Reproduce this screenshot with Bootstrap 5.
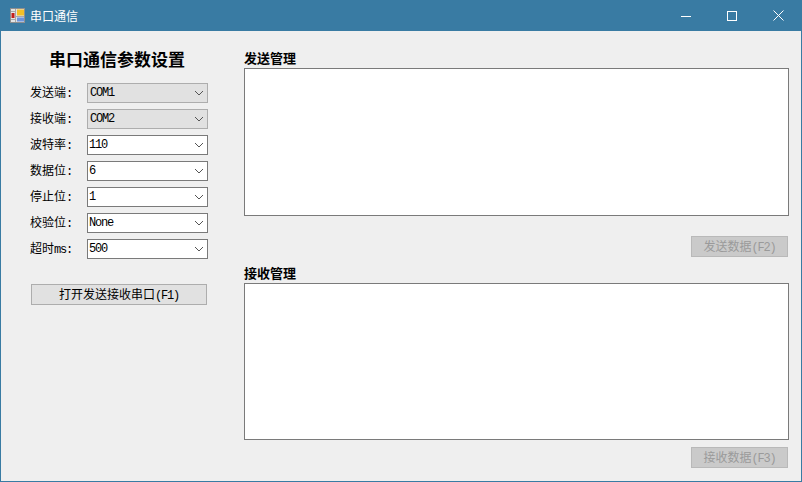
<!DOCTYPE html>
<html lang="zh">
<head>
<meta charset="utf-8">
<title>串口通信</title>
<link href="https://cdn.jsdelivr.net/npm/bootstrap@5.3.0/dist/css/bootstrap.min.css" rel="stylesheet">
<style>
html,body{height:100%;margin:0;overflow:hidden}
body{font-family:"Noto Sans CJK SC",sans-serif;font-size:12px;color:#000;background:#efefef}
.lat{font-family:"Liberation Mono",monospace;font-size:12px;letter-spacing:-1.2px}
.win{width:802px;height:482px;border:1px solid #397ba3;border-top:0;background:#efefef}
.tbar{height:31px;background:#397ba3;color:#fff;padding-left:9px;flex:none}
.tname{font-size:12px;margin-left:5px;line-height:31px}
.wbtn{width:46px;height:31px;display:flex;align-items:center;justify-content:center}
.wrap{flex:1;min-height:0}
.leftp{width:243px;flex:none;padding:17px 0 0 29px}
.ttl{width:174px;font-weight:700;font-size:17px;line-height:22px;margin-bottom:13px;text-align:center}
.frow{height:20px;margin-bottom:6px}
.lbl{width:57px;flex:none;font-size:12px;line-height:18px}
.cmb{width:121px;height:20px;border:1px solid #7a7a7a;background:#fff;padding:0 3px 0 1px;line-height:18px}
.cmb.off{border-color:#adadad;background:#e1e1e1;padding-left:2px}
.btn.opn{width:176px;height:21px;margin:25px 0 0 1px;border:1px solid #adadad;background:#e1e1e1;border-radius:0;padding:0;font-size:12px;line-height:18px;color:#000}
.rightp{flex:1;padding-top:17px;padding-right:12px}
.sect{font-weight:700;font-size:13px;line-height:19px;height:20px}
.tx{display:block;width:545px;border:1px solid #7a7a7a;background:#fff;border-radius:0;padding:0;resize:none;outline:0}
.t1{height:148px}
.t2{height:157px}
.btn.act:disabled{width:97px;height:21px;border:1px solid #b9b9b9;background:#cacaca;color:#9a9a9a;border-radius:0;padding:0;font-size:12px;line-height:18px;opacity:1}
.actbar{padding-right:1px}
.btn.act.a1{margin-top:20px;margin-bottom:6px}
.btn.act.a2{margin-top:7px}
</style>
</head>
<body>
<div class="win d-flex flex-column">
  <div class="tbar d-flex align-items-center">
    <svg width="15" height="15" viewBox="0 0 15 15"><rect x=".5" y=".5" width="14" height="14" fill="#e4e4e4" stroke="#8f8f8f"/><path d="M5.500 1v13M1 3.500h4M1 11.500h4M6 8.500h8" stroke="#a8a8a8" fill="none"/><rect x="1.500" y="5" width="3" height="5" fill="#c4201c"/><rect x="7" y="1.500" width="7" height="6" fill="#f4c025"/><rect x="7" y="9.500" width="7" height="4" fill="#6d94dc"/></svg>
    <span class="tname">串口通信</span>
    <div class="ms-auto d-flex">
      <div class="wbtn"><svg width="10" height="10" viewBox="0 0 10 10"><path d="M0 5.500h10" stroke="#fff" fill="none"/></svg></div>
      <div class="wbtn"><svg width="10" height="10" viewBox="0 0 10 10"><rect x=".5" y=".5" width="9" height="9" stroke="#fff" fill="none"/></svg></div>
      <div class="wbtn"><svg width="11" height="11" viewBox="0 0 11 11"><path d="M.5.5l10 10M10.500.5l-10 10" stroke="#fff" fill="none"/></svg></div>
    </div>
  </div>
  <div class="wrap d-flex">
    <div class="leftp">
      <div class="ttl">串口通信参数设置</div>
      <div class="frow d-flex"><span class="lbl">发送端<span class="lat">:</span></span><div class="cmb off d-flex align-items-center justify-content-between"><span class="lat">COM1</span><svg width="10" height="6" viewBox="0 0 10 6"><path d="M1 1l4 4 4-4" stroke="#555" fill="none"/></svg></div></div>
      <div class="frow d-flex"><span class="lbl">接收端<span class="lat">:</span></span><div class="cmb off d-flex align-items-center justify-content-between"><span class="lat">COM2</span><svg width="10" height="6" viewBox="0 0 10 6"><path d="M1 1l4 4 4-4" stroke="#555" fill="none"/></svg></div></div>
      <div class="frow d-flex"><span class="lbl">波特率<span class="lat">:</span></span><div class="cmb d-flex align-items-center justify-content-between"><span class="lat">110</span><svg width="10" height="6" viewBox="0 0 10 6"><path d="M1 1l4 4 4-4" stroke="#555" fill="none"/></svg></div></div>
      <div class="frow d-flex"><span class="lbl">数据位<span class="lat">:</span></span><div class="cmb d-flex align-items-center justify-content-between"><span class="lat">6</span><svg width="10" height="6" viewBox="0 0 10 6"><path d="M1 1l4 4 4-4" stroke="#555" fill="none"/></svg></div></div>
      <div class="frow d-flex"><span class="lbl">停止位<span class="lat">:</span></span><div class="cmb d-flex align-items-center justify-content-between"><span class="lat">1</span><svg width="10" height="6" viewBox="0 0 10 6"><path d="M1 1l4 4 4-4" stroke="#555" fill="none"/></svg></div></div>
      <div class="frow d-flex"><span class="lbl">校验位<span class="lat">:</span></span><div class="cmb d-flex align-items-center justify-content-between"><span class="lat">None</span><svg width="10" height="6" viewBox="0 0 10 6"><path d="M1 1l4 4 4-4" stroke="#555" fill="none"/></svg></div></div>
      <div class="frow d-flex"><span class="lbl">超时<span class="lat">ms:</span></span><div class="cmb d-flex align-items-center justify-content-between"><span class="lat">500</span><svg width="10" height="6" viewBox="0 0 10 6"><path d="M1 1l4 4 4-4" stroke="#555" fill="none"/></svg></div></div>
      <button type="button" class="btn opn d-block">打开发送接收串口<span class="lat">(F1)</span></button>
    </div>
    <div class="rightp">
      <div class="sect">发送管理</div>
      <textarea class="form-control tx t1" aria-label="发送管理"></textarea>
      <div class="actbar d-flex justify-content-end"><button type="button" class="btn act a1" disabled>发送数据<span class="lat">(F2)</span></button></div>
      <div class="sect">接收管理</div>
      <textarea class="form-control tx t2" aria-label="接收管理"></textarea>
      <div class="actbar d-flex justify-content-end"><button type="button" class="btn act a2" disabled>接收数据<span class="lat">(F3)</span></button></div>
    </div>
  </div>
</div>
<script src="https://cdn.jsdelivr.net/npm/bootstrap@5.3.0/dist/js/bootstrap.bundle.min.js"></script>
</body>
</html>
